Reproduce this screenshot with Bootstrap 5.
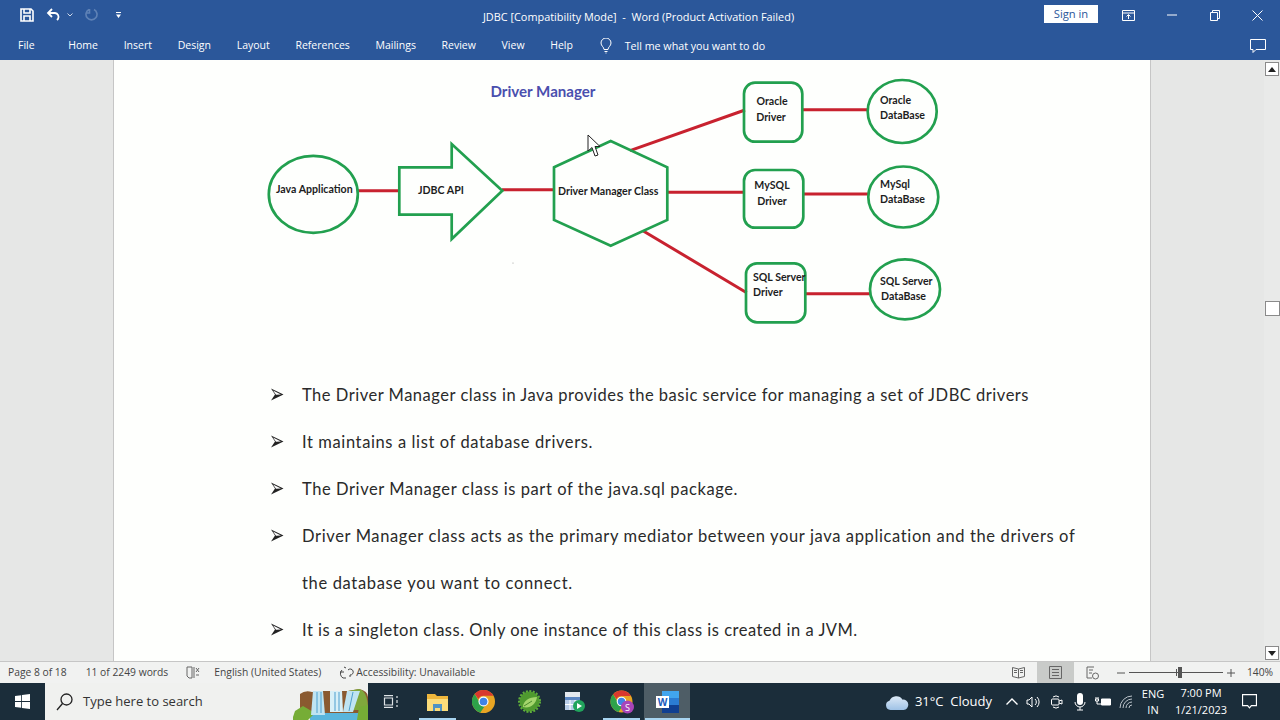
<!DOCTYPE html>
<html lang="en">
<head>
<meta charset="utf-8">
<title>JDBC - Word</title>
<link href="https://cdn.jsdelivr.net/npm/bootstrap@5.3.0/dist/css/bootstrap.min.css" rel="stylesheet">
<style>
html,body{height:720px;overflow:hidden;margin:0}
body{font-family:"Open Sans","Liberation Sans",sans-serif;background:#e6e7e6;display:flex;flex-direction:column;width:1280px}
.ribbon{background:#2b579a;color:#fff;font-size:10.5px}
.title-row{height:30px;position:relative}
.q-cell{width:26px;justify-content:center}
.q-undo{margin-left:1px}
.q-redo{margin-left:6px}
.qat{padding-left:14px}
.doc-title{position:absolute;left:0;right:3px;top:9px;text-align:center;font-size:10.9px;line-height:15px}
.win-wrap{margin-right:1px}
.signin{background:#fff;color:#2b579a;width:54px;height:18px;font-size:11.2px;line-height:18px;text-align:center;margin-right:9px;margin-top:-2px}
.win-cell{width:43px;display:flex;justify-content:center}
.tab-row{height:30px;padding:2px 0 0 18px;gap:25.7px}
.tab-home{margin-left:8px}
.tell{gap:13px;margin-left:1px;font-size:10.7px}
.comment{margin-right:14px}
.work{height:601px;overflow:hidden}
.side-left{width:114px;background:#e6e7e6;border-right:1px solid #c6c6c6}
.sheet{width:1036px;background:#fefffd;overflow:hidden;flex:none}
.side-right{flex:1;background:#e6e7e6;border-left:1px solid #c6c6c6}
.vscroll{width:16px;background:#e9eae9;flex:none;padding:2px 1px 1px;align-items:center}
.sb-btn{width:14px;height:14px;border:1px solid #8a8a8a;background:#fff;display:flex;align-items:center;justify-content:center}
.sb-thumb{width:15px;height:15px;background:#fff;border:1px solid #8a8a8a;margin:225px 0 auto}
.diagram{display:block;height:312px;width:1036px}
.diagram text{font-family:Lato,"Liberation Sans",sans-serif;font-weight:700;font-size:10.6px;fill:#1d1d1d}
.diagram .dtitle{font-size:15.1px;fill:#4a4fae}
.bullets{font-family:Lato,"Liberation Sans",sans-serif;font-size:16.5px;letter-spacing:.51px;color:#2a2a2a;margin:0;padding:0 0 0 157px;line-height:47px}
.bullets li{display:flex;align-items:flex-start}
.bullets svg{flex:none;margin:16px 18px 0 0}
.bullets li:nth-child(2){letter-spacing:.61px}
.bullets li:nth-child(3){letter-spacing:.58px}
.bullets li:nth-child(4){letter-spacing:.63px}
.bullets li:nth-child(5){letter-spacing:.5px}
.wrap-line{letter-spacing:.66px}
.statusbar{height:22px;background:#f1f2f1;border-top:1px solid #c6c6c6;font-size:10.3px;color:#444;padding-left:8px;flex:none}
.st-words{margin-left:19px}
.st-proof{margin:0 14px 0 18px}
.st-acc{margin-left:18px;gap:2px}
.view-cell{width:37px;height:100%;display:flex;align-items:center;justify-content:center}
.view-on{background:#c9cbc9}
.views{margin-left:auto;height:100%}
.slider-track{width:94px;height:1px;background:#555;position:relative;margin:0 4px}
.slider-thumb{position:absolute;left:49px;top:-5px;width:4px;height:11px;background:#555}
.slider-tick{position:absolute;left:47px;top:-3px;width:1px;height:7px;background:#555}
.zoom-wrap{margin-left:6px}
.zoom-pct{width:40px;margin-left:5px;text-align:center;font-size:10.3px}
.taskbar{height:37px;background:#1b2d3a;color:#fff;flex:none}
.start{width:45px;display:flex;align-items:center;justify-content:center;height:100%}
.searchbox{width:323px;height:100%;background:#f0f1ef;color:#333;font-size:13px;padding-left:11px;gap:10px;position:relative;overflow:hidden}
.falls{position:absolute;right:0;top:0}
.tb-icon{width:46px;height:100%;display:flex;align-items:center;justify-content:center;position:relative}
.tb-on{background:#4e5d66}
.tb-line::after{content:"";position:absolute;left:5px;right:4px;bottom:0;height:2px;background:#a8d4f0}
.tb-on.tb-line::after{left:1px;right:0}
.tray{margin-left:auto;height:100%;font-size:13px;padding-right:15px}
.weather{gap:6px;margin-right:9px}
.tray-ic{width:23px;display:flex;justify-content:center}
.tray-caret{width:21px}
.lang{font-size:11px;line-height:16px;text-align:center;width:30px;margin-left:1px}
.clock{font-size:11px;line-height:17px;text-align:center;width:64px;margin:-1px 0 0 1px}
.notify{width:32px;display:flex;justify-content:center}
</style>
</head>
<body>
<header class="ribbon flex-none">
  <div class="title-row d-flex align-items-center">
    <div class="qat d-flex align-items-center">
      <span class="q-cell d-flex"><svg width="14" height="14" viewBox="0 0 14 14" fill="none" stroke="#fff" stroke-width="1.6"><path d="M1 1h10l2 2v10H1z"/><path d="M4 1v4h6V1M4 13V8h6v5"/></svg></span>
      <span class="q-cell q-undo d-flex"><svg width="16" height="14" viewBox="0 0 16 14" fill="none" stroke="#fff" stroke-width="1.8"><path d="M6 1 2 5l4 4"/><path d="M2 5h7a4 4 0 0 1 3 6l-1 1"/></svg></span>
      <svg width="6" height="4" viewBox="0 0 6 4" fill="none" stroke="#cfd9e8"><path d="M.5 .5 3 3l2.500-2.500"/></svg>
      <span class="q-cell q-redo d-flex"><svg width="14" height="14" viewBox="0 0 14 14" fill="none" stroke="#5f82b6" stroke-width="1.6"><path d="M9 1.500a5.500 5.500 0 1 1-5 0M4.500 1v4H1"/></svg></span>
      <span class="q-cell d-flex"><svg width="5" height="6" viewBox="0 0 5 6" fill="#fff"><path d="M0 0h5v1H0zM0 2.500h5L2.500 6z"/></svg></span>
    </div>
    <div class="doc-title">JDBC [Compatibility Mode]&nbsp; -&nbsp; Word (Product Activation Failed)</div>
    <div class="win-wrap ms-auto d-flex align-items-center position-relative">
      <div class="signin">Sign in</div>
      <span class="win-cell"><svg width="13" height="11" viewBox="0 0 13 11" fill="none" stroke="#fff"><path d="M.5 .5h12v10H.5zM.5 3h12"/><path d="M6.500 9V5M4.500 6.500l2-2 2 2"/></svg></span>
      <span class="win-cell"><svg width="10" height="2" viewBox="0 0 10 2" stroke="#fff"><path d="M0 1h10"/></svg></span>
      <span class="win-cell"><svg width="10" height="11" viewBox="0 0 10 11" fill="none" stroke="#fff"><path d="M.5 2.500h7v8h-7zM2.500 2.500v-2h7v8h-2"/></svg></span>
      <span class="win-cell"><svg width="11" height="11" viewBox="0 0 11 11" stroke="#fff"><path d="m.5 .5 10 10M10.500 .5l-10 10"/></svg></span>
    </div>
  </div>
  <div class="tab-row d-flex align-items-center">
    <span>File</span><span class="tab-home">Home</span><span>Insert</span><span>Design</span><span>Layout</span><span>References</span><span>Mailings</span><span>Review</span><span>View</span><span>Help</span>
    <span class="tell d-flex align-items-center"><svg width="12" height="16" viewBox="0 0 12 16" fill="none" stroke="#fff"><path d="M4 11.500C4 9 1 8 1 5a5 5 0 0 1 10 0c0 3-3 4-3 6.500zM4.500 13.500h3M5.500 15h1"/></svg><span>Tell me what you want to do</span></span>
    <span class="ms-auto comment"><svg width="16" height="15" viewBox="0 0 16 15" fill="none" stroke="#fff"><path d="M.5 .5h15v10H6l-3 3v-3H.5z"/></svg></span>
  </div>
</header>
<main class="work d-flex">
  <div class="side-left"></div>
  <article class="sheet">
    <svg class="diagram" viewBox="114 60 1036 312" xmlns="http://www.w3.org/2000/svg">
      <g stroke="#c8222f" stroke-width="3" fill="none">
        <path d="M358 190.700H399M502 189.700H554M630 150.700 745 110M667 192.300H744M643.300 231 746.700 292.700M801.700 109.700H868.300M802.700 194H868.300M805 293.700H870.700"/>
      </g>
      <g stroke="#22a04f" stroke-width="2.7" fill="none">
        <ellipse cx="313.300" cy="194.300" rx="44.500" ry="38.500"/>
        <path d="M399.300 167.300H451.700V144L502.300 190.700 451.700 239V214.700H399.300Z"/>
        <path d="M554 167.300 610.700 141 667.300 167.300V220L610.700 245.700 554 220Z"/>
        <rect x="744" y="82.700" width="58.300" height="59" rx="11"/>
        <rect x="744" y="170" width="59.300" height="57.700" rx="11"/>
        <rect x="746" y="263.300" width="59.300" height="59" rx="11"/>
        <ellipse cx="902.200" cy="111.500" rx="34.500" ry="31.500"/>
        <ellipse cx="903.300" cy="197" rx="35" ry="30.500"/>
        <ellipse cx="905" cy="289.300" rx="35" ry="30"/>
      </g>
      <text class="dtitle" x="543" y="97" text-anchor="middle">Driver Manager</text>
      <text x="276" y="193">Java Application</text>
      <text x="418" y="194">JDBC API</text>
      <text x="558" y="195">Driver Manager Class</text>
      <text x="772" y="105" text-anchor="middle">Oracle</text>
      <text x="771" y="121" text-anchor="middle">Driver</text>
      <text x="772" y="189" text-anchor="middle">MySQL</text>
      <text x="772" y="205" text-anchor="middle">Driver</text>
      <text x="753" y="281">SQL Server</text>
      <text x="753" y="296">Driver</text>
      <text x="880" y="104">Oracle</text>
      <text x="880" y="119">DataBase</text>
      <text x="880" y="188">MySql</text>
      <text x="880" y="203">DataBase</text>
      <text x="880" y="285">SQL Server</text>
      <text x="881" y="300">DataBase</text>
      <circle cx="513" cy="263" r=".6" fill="#999"/>
      <path d="M588 135V151L592 147.500 595 156 598 155 595 146.500H600Z" fill="#fff" stroke="#222"/>
    </svg>
    <ul class="bullets list-unstyled">
      <li><svg width="13" height="13" viewBox="0 0 13 13"><path d="M0 .5 12.500 6.500 0 12.500 4 6.500Z" fill="#222"/><path d="M2 2.500 10 6.500 5 6.800Z" fill="#fff"/></svg><span>The Driver Manager class in Java provides the basic service for managing a set of JDBC drivers</span></li>
      <li><svg width="13" height="13" viewBox="0 0 13 13"><path d="M0 .5 12.500 6.500 0 12.500 4 6.500Z" fill="#222"/><path d="M2 2.500 10 6.500 5 6.800Z" fill="#fff"/></svg><span>It maintains a list of database drivers.</span></li>
      <li><svg width="13" height="13" viewBox="0 0 13 13"><path d="M0 .5 12.500 6.500 0 12.500 4 6.500Z" fill="#222"/><path d="M2 2.500 10 6.500 5 6.800Z" fill="#fff"/></svg><span>The Driver Manager class is part of the java.sql package.</span></li>
      <li><svg width="13" height="13" viewBox="0 0 13 13"><path d="M0 .5 12.500 6.500 0 12.500 4 6.500Z" fill="#222"/><path d="M2 2.500 10 6.500 5 6.800Z" fill="#fff"/></svg><span>Driver Manager class acts as the primary mediator between your java application and the drivers of<br><span class="wrap-line">the database you want to connect.</span></span></li>
      <li><svg width="13" height="13" viewBox="0 0 13 13"><path d="M0 .5 12.500 6.500 0 12.500 4 6.500Z" fill="#222"/><path d="M2 2.500 10 6.500 5 6.800Z" fill="#fff"/></svg><span>It is a singleton class. Only one instance of this class is created in a JVM.</span></li>
    </ul>
  </article>
  <div class="side-right"></div>
  <div class="vscroll d-flex flex-column">
    <span class="sb-btn"><svg width="8" height="5" viewBox="0 0 8 5"><path d="M4 0 8 5H0z" fill="#222"/></svg></span>
    <span class="sb-thumb"></span>
    <span class="sb-btn"><svg width="8" height="5" viewBox="0 0 8 5"><path d="M0 0h8L4 5z" fill="#222"/></svg></span>
  </div>
</main>
<footer class="statusbar d-flex align-items-center">
  <span>Page 8 of 18</span><span class="st-words">11 of 2249 words</span>
  <span class="st-proof d-flex"><svg width="14" height="14" viewBox="0 0 14 14" fill="none" stroke="#666"><path d="M1 1h5v11H3l-2-2zM8 1v11"/><path d="m10 2 3 4M13 2l-3 4M10 9h3"/></svg></span>
  <span>English (United States)</span>
  <span class="st-acc d-flex align-items-center"><svg width="15" height="14" viewBox="0 0 15 14" fill="none" stroke="#444"><path d="M3 4a5 5 0 0 0 1 8h3M5 1l2 1M1 6h4M9 4a3 3 0 1 1 2 5v2"/></svg><span>Accessibility: Unavailable</span></span>
  <div class="views d-flex align-items-center">
    <span class="view-cell"><svg width="13" height="13" viewBox="0 0 13 13" fill="none" stroke="#666"><path d="M.5 1.500 6.500 3l6-1.500v9l-6 1.500-6-1.500zM6.500 3v9M2 4.500h3M2 6.500h3M8 4.500h3M8 6.500h3"/></svg></span>
    <span class="view-cell view-on"><svg width="13" height="13" viewBox="0 0 13 13" fill="none" stroke="#666"><path d="M.5 .5h12v12H.5zM3 3.500h7M3 6.500h7M3 9.500h7"/></svg></span>
    <span class="view-cell"><svg width="13" height="14" viewBox="0 0 13 14" fill="none" stroke="#666"><path d="M8 1H1v11h5M3 4h4M3 7h3"/><circle cx="9.500" cy="10" r="3"/></svg></span>
    <div class="zoom-wrap d-flex align-items-center">
      <svg width="8" height="2" viewBox="0 0 8 2"><path d="M0 1h8" stroke="#555"/></svg>
      <div class="slider-track"><span class="slider-tick"></span><span class="slider-thumb"></span></div>
      <svg width="8" height="8" viewBox="0 0 8 8"><path d="M0 4h8M4 0v8" stroke="#555"/></svg>
      <span class="zoom-pct">140%</span>
    </div>
  </div>
</footer>
<nav class="taskbar d-flex align-items-center">
  <span class="start"><svg width="15" height="15" viewBox="0 0 15 15" fill="#fff"><path d="M0 2.100 6.200 1.200V7H0zM7 1.100 15 0V7H7zM0 8h6.200v5.800L0 12.900zM7 8h8v7L7 13.900z"/></svg></span>
  <div class="searchbox d-flex align-items-center">
    <svg width="17" height="18" viewBox="0 0 17 18" fill="none" stroke="#222" stroke-width="1.300"><circle cx="10.500" cy="6.500" r="5.500"/><path d="M6.500 10.500 1 17"/></svg>
    <span>Type here to search</span>
    <svg class="falls" width="75" height="37" viewBox="0 0 75 37"><path d="M7 11Q12 7 19 9L30 8H37L49 8H55L66 6Q75 8 75 14V30H7Z" fill="#8a5a30"/><path d="M55 8 66 6Q75 8 75 27H58Z" fill="#7fa83c"/><path d="M17 30H75V37H17Z" fill="#59b5dc"/><path d="M-1 37 2 28 10 23 22 30 15 37Z" fill="#76ad36"/><path d="M64 37 66 24 75 22V37Z" fill="#76ad36"/><path d="M20 8H30L32 32H18Z" fill="#bfe4f2"/><path d="M37 8H49L50 29H37Z" fill="#d8f0f7"/><path d="M54 8H67L60 29H50Z" fill="#bfe4f2"/><path d="M24 9V30M28 9V30M42 9V28M46 9V28M60 9 56 28" stroke="#4d9fce"/></svg>
  </div>
  <span class="tb-icon"><svg width="16" height="13" viewBox="0 0 16 13" fill="none" stroke="#dfe3e6" stroke-width="1.200"><path d="M1 .6h9M1 12.400h9M1.500 3h8v7h-8zM14 1v2M14 5v3M14 10v2"/></svg></span>
  <span class="tb-icon tb-line"><svg width="21" height="18" viewBox="0 0 21 18"><path d="M0 1h8l2 2h11v15H0z" fill="#eeb63c"/><path d="M0 6h21v12H0z" fill="#fbdc7a"/><path d="M6 11h9v7h-2v-3H8v3H6z" fill="#4f93c4"/></svg></span>
  <span class="tb-icon"><svg width="23" height="23" viewBox="0 0 22 22"><circle cx="11" cy="11" r="11" fill="#e8a523"/><path d="M11 0a11 11 0 0 1 9.500 5.500H11a5.500 5.500 0 0 0-5 3.200L2.600 3.800A11 11 0 0 1 11 0z" fill="#d9392e"/><path d="M2.600 3.800 7 11.500a5 5 0 0 0 5 4.300L8 21.600A11 11 0 0 1 2.600 3.800z" fill="#2ea24a"/><circle cx="11" cy="11" r="4.800" fill="#fff"/><circle cx="11" cy="11" r="3.700" fill="#3f83e6"/></svg></span>
  <span class="tb-icon"><svg width="23" height="23" viewBox="0 0 23 23"><circle cx="11.500" cy="11.500" r="10" fill="#4f9a2f"/><circle cx="11.500" cy="11.500" r="10.500" fill="none" stroke="#5fae3a" stroke-width="2" stroke-dasharray="2 1.500"/><path d="M5 17C5 11 11 7 19 7 18 14 12 19 5 17Z" fill="#a5d66d"/><path d="M6 16 14 11" stroke="#4b8b2e" fill="none"/></svg></span>
  <span class="tb-icon"><svg width="20" height="20" viewBox="0 0 20 20"><path d="M0 0h15v18H0z" fill="#b8cde8"/><path d="M0 0h15v5H0z" fill="#e3e8ef"/><path d="M0 5h15v3H0z" fill="#5b86c2"/><path d="M5 8v10M10 8v10M0 12.500h15" stroke="#fff"/><circle cx="14" cy="14" r="6" fill="#21a45c"/><path d="M12 11l5 3-5 3z" fill="#fff"/></svg></span>
  <span class="tb-icon tb-line"><svg width="25" height="25" viewBox="0 0 25 25"><g transform="translate(1.500 1.500)"><circle cx="11" cy="11" r="11" fill="#e8a523"/><path d="M11 0a11 11 0 0 1 9.500 5.500H11a5.500 5.500 0 0 0-5 3.200L2.600 3.800A11 11 0 0 1 11 0z" fill="#d9392e"/><path d="M2.600 3.800 7 11.500a5 5 0 0 0 5 4.300L8 21.600A11 11 0 0 1 2.600 3.800z" fill="#2ea24a"/><circle cx="11" cy="11" r="4.800" fill="#fff"/><circle cx="11" cy="11" r="3.700" fill="#3f83e6"/></g><circle cx="18.500" cy="18" r="6.500" fill="#a944b8"/><text x="18.500" y="21.500" font-size="9" fill="#fff" text-anchor="middle" font-family="Open Sans">S</text></svg></span>
  <span class="tb-icon tb-on tb-line"><svg width="23" height="22" viewBox="0 0 23 22"><path d="M6 0h17v22H6z" fill="#2b7cd3"/><path d="M6 0h17v7H6z" fill="#41a5ee"/><path d="M6 14h17v8H6z" fill="#103f91"/><path d="M0 5h13v12H0z" fill="#fff"/><text x="6.500" y="14.500" font-size="10" font-weight="700" fill="#185abd" text-anchor="middle" font-family="Open Sans">W</text></svg></span>
  <div class="tray d-flex align-items-center">
    <span class="weather d-flex align-items-center"><svg width="24" height="16" viewBox="0 0 24 17"><defs><linearGradient id="cl" x1="0" y1="0" x2="0" y2="1"><stop offset="0" stop-color="#dce9f6"/><stop offset="1" stop-color="#9fc2e6"/></linearGradient></defs><path d="M5 17a5 5 0 0 1-1-9.800A8 8 0 0 1 18 6a5.500 5.500 0 0 1 1 11z" fill="url(#cl)"/></svg><span>31°C&nbsp; Cloudy</span></span>
    <span class="tray-ic tray-caret"><svg width="12" height="7" viewBox="0 0 12 7" fill="none" stroke="#fff" stroke-width="1.400"><path d="M.5 6.500 6 1l5.500 5.500"/></svg></span>
    <span class="tray-ic"><svg width="15" height="14" viewBox="0 0 15 14" fill="none" stroke="#fff"><path d="M1 5h2l3-3v10L3 9H1zM9 4a4 4 0 0 1 0 6M11 2a7 7 0 0 1 0 10"/></svg></span>
    <span class="tray-ic"><svg width="12" height="18" viewBox="0 0 12 18" fill="none" stroke="#fff"><path d="M2 4a5 5 0 0 1 6 0M2 14a5 5 0 0 0 6 0"/><rect x=".5" y="6" width="7.500" height="6" rx="1"/><path d="m8 8 3-1v4l-3-1"/></svg></span>
    <span class="tray-ic"><svg width="12" height="18" viewBox="0 0 12 18" fill="none"><rect x="3" y="0" width="6" height="12" rx="3" fill="#fff"/><path d="M1 9a5 5 0 0 0 10 0M6 14v3M3 17h6" stroke="#fff"/></svg></span>
    <span class="tray-ic"><svg width="16" height="11" viewBox="0 0 16 11" fill="none" stroke="#fff"><path d="M6.500 3h9v6h-9z" fill="#fff"/><path d="M1 1v2M3 1v2M.5 3h3v2h-3zM2 5v3h4" stroke-width="1"/></svg></span>
    <span class="tray-ic"><svg width="14" height="14" viewBox="0 0 14 14" fill="none" stroke="#bcc4cb"><path d="M1 13A12 12 0 0 1 13 1M4 13a9 9 0 0 1 9-9M7 13a6 6 0 0 1 6-6M10 13a3 3 0 0 1 3-3"/></svg></span>
    <div class="lang">ENG<br>IN</div>
    <div class="clock">7:00 PM<br>1/21/2023</div>
    <span class="notify"><svg width="15" height="15" viewBox="0 0 16 16" fill="none" stroke="#fff" stroke-width="1.200"><path d="M.6.6h14.800v11.800H10l-2 2.500-2-2.500H.6z"/></svg></span>
  </div>
</nav>
<script src="https://cdn.jsdelivr.net/npm/bootstrap@5.3.0/dist/js/bootstrap.bundle.min.js"></script>
</body>
</html>
